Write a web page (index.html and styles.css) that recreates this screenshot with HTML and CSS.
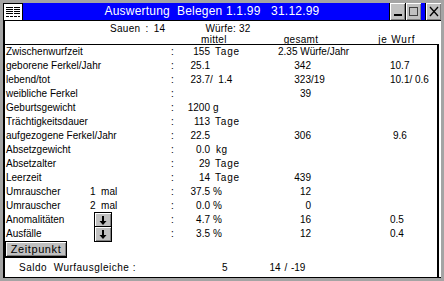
FILE: index.html
```html
<!DOCTYPE html>
<html lang="de">
<head>
  <meta charset="UTF-8" />
  <title>Auswertung Belegen</title>
  <link rel="stylesheet" href="styles.css">
</head>
<body>
  <div class="window">
    <div class="titlebar">
      <div class="sysmenu">
        <svg width="18" height="15" viewBox="0 0 18 15">
          <g fill="#000">
            <rect x="2" y="2" width="7" height="1"/><rect x="10" y="2" width="6" height="1"/>
            <rect x="2" y="4" width="7" height="1"/><rect x="10" y="4" width="6" height="1"/>
            <rect x="2" y="6" width="7" height="1"/><rect x="10" y="6" width="6" height="1"/>
            <rect x="2" y="8" width="7" height="1"/><rect x="10" y="8" width="6" height="1"/>
            <rect x="2" y="11" width="3" height="1"/><rect x="6" y="11" width="3" height="1"/>
            <rect x="10" y="11" width="3" height="1"/><rect x="14" y="11" width="2" height="1"/>
          </g>
        </svg>
      </div>
      <div class="title">Auswertung&nbsp; Belegen 1.1.99 &nbsp; 31.12.99</div>
      <div class="ctl"><span class="min-bar"></span></div>
      <div class="ctl"><span class="max-box"></span></div>
      <div class="ctl-gap"></div>
      <div class="ctl">
        <svg width="14" height="15" viewBox="0 0 14 15">
          <path d="M3 3 L11 12 M11 3 L3 12" stroke="#000" stroke-width="1.3" fill="none"/>
        </svg>
      </div>
    </div>

    <div class="client">
      <div class="summary">
        <span class="sauen">Sauen : 14</span>
        <span class="wuerfe">Würfe: 32</span>
      </div>
      <div class="colhead">
        <span class="h-mittel">mittel</span>
        <span class="h-gesamt">gesamt</span>
        <span class="h-wurf">je Wurf</span>
      </div>

      <div class="listbox">
        <div class="rows">
          <div class="row">
            <span class="label">Zwischenwurfzeit</span><span></span><span class="colon">:</span>
            <span class="mittel"><span class="n">155</span><span class="u tage">Tage</span></span>
            <span class="gesamt plain">2.35 Würfe/Jahr</span>
            <span class="wurf"></span>
          </div>
          <div class="row">
            <span class="label">geborene Ferkel/Jahr</span><span></span><span class="colon">:</span>
            <span class="mittel"><span class="n">25.1</span></span>
            <span class="gesamt"><span class="n">342</span></span>
            <span class="wurf">10.7</span>
          </div>
          <div class="row">
            <span class="label">lebend/tot</span><span></span><span class="colon">:</span>
            <span class="mittel"><span class="n">23.7</span><span class="pre">/  1.4</span></span>
            <span class="gesamt"><span class="n">323</span>/19</span>
            <span class="wurf pre">10.1/ 0.6</span>
          </div>
          <div class="row">
            <span class="label">weibliche Ferkel</span><span></span><span class="colon">:</span>
            <span class="mittel"></span>
            <span class="gesamt"><span class="n">39</span></span>
            <span class="wurf"></span>
          </div>
          <div class="row">
            <span class="label">Geburtsgewicht</span><span></span><span class="colon">:</span>
            <span class="mittel"><span class="n">1200</span><span class="u">g</span></span>
            <span class="gesamt"></span>
            <span class="wurf"></span>
          </div>
          <div class="row">
            <span class="label">Trächtigkeitsdauer</span><span></span><span class="colon">:</span>
            <span class="mittel"><span class="n">113</span><span class="u tage">Tage</span></span>
            <span class="gesamt"></span>
            <span class="wurf"></span>
          </div>
          <div class="row">
            <span class="label">aufgezogene Ferkel/Jahr</span><span></span><span class="colon">:</span>
            <span class="mittel"><span class="n">22.5</span></span>
            <span class="gesamt"><span class="n">306</span></span>
            <span class="wurf shift">9.6</span>
          </div>
          <div class="row">
            <span class="label">Absetzgewicht</span><span></span><span class="colon">:</span>
            <span class="mittel"><span class="n">0.0</span><span class="u kg">kg</span></span>
            <span class="gesamt"></span>
            <span class="wurf"></span>
          </div>
          <div class="row">
            <span class="label">Absetzalter</span><span></span><span class="colon">:</span>
            <span class="mittel"><span class="n">29</span><span class="u tage">Tage</span></span>
            <span class="gesamt"></span>
            <span class="wurf"></span>
          </div>
          <div class="row">
            <span class="label">Leerzeit</span><span></span><span class="colon">:</span>
            <span class="mittel"><span class="n">14</span><span class="u tage">Tage</span></span>
            <span class="gesamt"><span class="n">439</span></span>
            <span class="wurf"></span>
          </div>
          <div class="row">
            <span class="label">Umrauscher</span><span class="extra">1&nbsp; mal</span><span class="colon">:</span>
            <span class="mittel"><span class="n">37.5</span><span class="u pct">%</span></span>
            <span class="gesamt"><span class="n">12</span></span>
            <span class="wurf"></span>
          </div>
          <div class="row">
            <span class="label">Umrauscher</span><span class="extra">2&nbsp; mal</span><span class="colon">:</span>
            <span class="mittel"><span class="n">0.0</span><span class="u pct">%</span></span>
            <span class="gesamt"><span class="n">0</span></span>
            <span class="wurf"></span>
          </div>
          <div class="row">
            <span class="label">Anomalitäten</span>
            <span class="extra"><span class="arrow-btn"><svg width="10" height="11" viewBox="0 0 10 11"><path d="M4 1 H6 V6 H8.5 L5 10 L1.5 6 H4 Z" fill="#000"/></svg></span></span>
            <span class="colon">:</span>
            <span class="mittel"><span class="n">4.7</span><span class="u pct">%</span></span>
            <span class="gesamt"><span class="n">16</span></span>
            <span class="wurf">0.5</span>
          </div>
          <div class="row">
            <span class="label">Ausfälle</span>
            <span class="extra"><span class="arrow-btn"><svg width="10" height="11" viewBox="0 0 10 11"><path d="M4 1 H6 V6 H8.5 L5 10 L1.5 6 H4 Z" fill="#000"/></svg></span></span>
            <span class="colon">:</span>
            <span class="mittel"><span class="n">3.5</span><span class="u pct">%</span></span>
            <span class="gesamt"><span class="n">12</span></span>
            <span class="wurf">0.4</span>
          </div>
        </div>

        <div class="btn-row">
          <span class="btn">Zeitpunkt</span>
        </div>

        <div class="saldo">
          <span class="saldo-label">Saldo&nbsp; Wurfausgleiche :</span>
          <span class="saldo-a">5</span>
          <span class="saldo-b">14 / -19</span>
        </div>
      </div>
    </div>
  </div>
</body>
</html>
```

FILE: styles.css
```css
* {
  box-sizing: border-box;
}
body {
  margin: 0;
  font-family: 'Liberation Sans', Arial, sans-serif;
  font-size: 10px;
  color: #000;
  background: #fff;
}
.window {
  width: 444px;
  height: 281px;
  border: 3px solid #a4a4a4;
  display: flex;
  flex-direction: column;
  background: #fff;
}
.titlebar {
  display: flex;
  height: 18px;
  border-bottom: 1px solid #000;
}
.sysmenu {
  width: 20px;
  background: #fff;
  border: 1px solid #000;
  border-bottom: none;
  display: flex;
  align-items: center;
  justify-content: center;
}
.title {
  flex: 1;
  background: #0000ff;
  color: #fff;
  font-size: 12px;
  line-height: 17px;
  text-align: center;
  padding-left: 12px;
  letter-spacing: 0.2px;
}
.ctl {
  width: 16px;
  background: #c0c0c0;
  border-left: 1px solid #000;
  box-shadow: inset 1px 1px #fff, inset -1px -1px #808080;
  display: flex;
  align-items: center;
  justify-content: center;
}
.ctl-gap {
  width: 4px;
  background: #0000ff;
}
.min-bar {
  width: 8px;
  height: 2px;
  background: #000;
  margin-top: 7px;
}
.max-box {
  width: 9px;
  height: 9px;
  border: 1px solid #404040;
}
.client {
  flex: 1;
  display: flex;
  flex-direction: column;
  border-left: 2px solid #000;
  border-bottom: 1px solid #000;
}
.summary {
  height: 13px;
  line-height: 13px;
  padding-top: 1px;
  display: flex;
}
.sauen {
  margin-left: 105px;
  word-spacing: 2px;
  letter-spacing: 0.3px;
}
.wuerfe {
  margin-left: 40px;
  letter-spacing: 0.2px;
}
.colhead {
  height: 10px;
  line-height: 11px;
  display: flex;
  letter-spacing: 0.3px;
}
.h-mittel {
  margin-left: 196px;
}
.h-gesamt {
  margin-left: 57px;
}
.h-wurf {
  margin-left: 60px;
  letter-spacing: 0.8px;
}
.listbox {
  flex: 1;
  display: flex;
  flex-direction: column;
  border-top: 1px solid #000;
  border-right: 2px solid #000;
  margin-right: 2px;
}
.row {
  display: grid;
  grid-template-columns: 84px 82px 14px 93px 112px 1fr;
  height: 14px;
  line-height: 14px;
  white-space: nowrap;
}
.label {
  padding-left: 1px;
}
.n {
  display: inline-block;
  text-align: right;
  width: 25px;
}
.gesamt .n {
  width: 33px;
}
.u {
  margin-left: 3px;
}
.u.pct {
  margin-left: 3px;
}
.u.tage {
  margin-left: 5px;
  letter-spacing: 0.8px;
}
.u.kg {
  margin-left: 6px;
  letter-spacing: 0.6px;
}
.pre {
  white-space: pre;
}
.wurf.shift {
  padding-left: 3px;
}
.extra {
  padding-left: 1px;
}
.arrow-btn {
  display: flex;
  align-items: center;
  justify-content: center;
  width: 18px;
  height: 16px;
  margin: -1px 0 -1px 4px;
  background: #c0c0c0;
  border: 1px solid #000;
  box-shadow: inset 1px 1px #fff, inset -1px -1px #808080;
}
.btn-row {
  height: 17px;
  display: flex;
}
.btn {
  width: 62px;
  height: 17px;
  line-height: 15px;
  text-align: center;
  background: #c0c0c0;
  border: 1px solid #000;
  border-bottom-width: 2px;
  box-shadow: inset 1px 1px #fff, inset -1px -1px #808080;
  font-size: 11px;
  letter-spacing: 0.6px;
}
.saldo {
  flex: 1;
  display: flex;
  align-items: center;
  white-space: nowrap;
}
.saldo-label {
  margin-left: 14px;
  letter-spacing: 0.5px;
}
.saldo-a {
  margin-left: 86px;
}
.saldo-b {
  margin-left: 42px;
  word-spacing: 1px;
}
```
